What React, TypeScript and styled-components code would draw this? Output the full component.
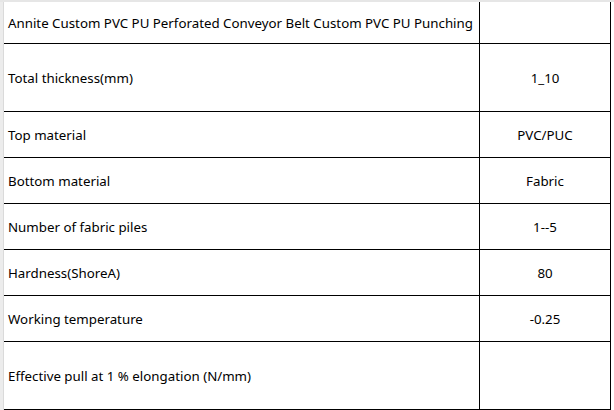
import React from 'react';
import styled, { createGlobalStyle } from 'styled-components';

const GlobalStyle = createGlobalStyle`
  html, body {
    margin: 0;
    padding: 0;
    background: #fff;
  }
  body {
    font-family: "Noto Sans", "Open Sans", sans-serif;
    color: #000;
  }
`;

const Sheet = styled.div`
  display: flex;
  width: 614px;
  height: 410px;
  border-top: 2px solid #e6e6e6;
  box-sizing: border-box;
  overflow: hidden;
`;

const RowHeaderEdge = styled.div`
  width: 4px;
  flex: none;
  background: #ececec;
  border-right: 1px solid #dadada;
  box-sizing: border-box;
`;

const Grid = styled.div`
  display: grid;
  grid-template-columns: 476px 131px;
  grid-auto-rows: min-content;
  align-content: start;
`;

const Cell = styled.div<{ $tall?: boolean; $first?: boolean; $center?: boolean }>`
  height: ${(p) => (p.$first ? 42 : p.$tall ? 68 : 46)}px;
  box-sizing: border-box;
  display: flex;
  align-items: center;
  justify-content: ${(p) => (p.$center ? 'center' : 'flex-start')};
  padding: 0 4px;
  border-bottom: 1px solid #000;
  border-right: 1px solid #000;
  font-size: 13.3px;
  font-variant-ligatures: none;
  white-space: nowrap;
`;

const rows: { label: string; value: string; tall?: boolean }[] = [
  { label: 'Annite Custom PVC PU Perforated Conveyor Belt Custom PVC PU Punching', value: '' },
  { label: 'Total thickness(mm)', value: '1_10', tall: true },
  { label: 'Top material', value: 'PVC/PUC' },
  { label: 'Bottom material', value: 'Fabric' },
  { label: 'Number of fabric piles', value: '1--5' },
  { label: 'Hardness(ShoreA)', value: '80' },
  { label: 'Working temperature', value: '-0.25' },
  { label: 'Effective pull at 1 % elongation (N/mm)', value: '', tall: true },
];

const App = () => (
  <>
    <GlobalStyle />
    <Sheet>
      <RowHeaderEdge />
      <Grid>
        {rows.map((row, i) => (
          <React.Fragment key={row.label}>
            <Cell $first={i === 0} $tall={row.tall}>
              {row.label}
            </Cell>
            <Cell $first={i === 0} $tall={row.tall} $center>
              {row.value}
            </Cell>
          </React.Fragment>
        ))}
      </Grid>
    </Sheet>
  </>
);

export default App;
